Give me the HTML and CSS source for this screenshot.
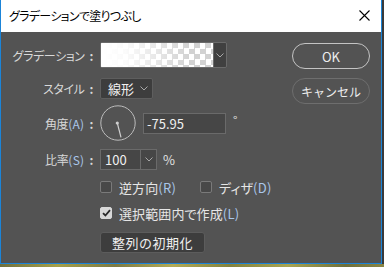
FILE: index.html
```html
<!DOCTYPE html>
<html lang="ja">
<head>
<meta charset="utf-8">
<link rel="stylesheet" href="styles.css">
</head>
<body>
<div class="win">
  <div class="titlebar">
    <span class="title">グラデーションで塗りつぶし</span>
    <svg class="close" width="11" height="11" viewBox="0 0 11 11"><path d="M0.5 0.5L10.5 10.5M10.5 0.5L0.5 10.5" stroke="#000" stroke-width="1.1" fill="none"/></svg>
  </div>
  <div class="body">
    <div class="form">
      <div class="row r-grad">
        <span class="lbl">グラデーション<span class="colon">:</span></span>
        <div class="gradpick">
          <div class="swatch"></div>
          <div class="ddbtn"><svg width="8" height="5" viewBox="0 0 8 5"><path d="M0.5 0.5L4 4L7.5 0.5" stroke="#a8a8a8" fill="none"/></svg></div>
        </div>
      </div>
      <div class="row r-style">
        <span class="lbl">スタイル<span class="colon">:</span></span>
        <div class="select"><span class="seltext">線形</span><svg width="8" height="5" viewBox="0 0 8 5"><path d="M0.5 0.5L4 4L7.5 0.5" stroke="#a8a8a8" fill="none"/></svg></div>
      </div>
      <div class="row r-angle">
        <span class="lbl">角度<span class="mn">(A)</span><span class="colon">:</span></span>
        <svg class="dial" width="36" height="36" viewBox="0 0 36 36">
          <circle cx="18" cy="18" r="17.2" stroke="#bdbdbd" stroke-width="1" fill="none"/>
          <circle cx="17.3" cy="18" r="1.6" fill="#cfcfcf"/>
          <path d="M17.3 18L21 32.3" stroke="#cfcfcf" stroke-width="1.2"/>
        </svg>
        <div class="input angle">-75.95</div>
        <span class="deg">°</span>
      </div>
      <div class="row r-ratio">
        <span class="lbl">比率<span class="mn">(S)</span><span class="colon">:</span></span>
        <div class="combo"><span class="ctext">100</span><span class="cbtn"><svg width="8" height="5" viewBox="0 0 8 5"><path d="M0.5 0.5L4 4L7.5 0.5" stroke="#a8a8a8" fill="none"/></svg></span></div>
        <span class="pct">%</span>
      </div>
      <div class="row r-chk1">
        <label class="chk"><span class="box"></span>逆方向<span class="mn">(R)</span></label>
        <label class="chk"><span class="box"></span>ディザ<span class="mn">(D)</span></label>
      </div>
      <div class="row r-chk2">
        <label class="chk"><span class="box on"><svg width="9" height="8" viewBox="0 0 9 8"><path d="M1 4.2L3.4 6.5L8 1.2" stroke="#2a2a2a" stroke-width="1.8" fill="none"/></svg></span>選択範囲内で作成<span class="mn">(L)</span></label>
      </div>
      <div class="row r-reset">
        <button class="reset">整列の初期化</button>
      </div>
    </div>
    <div class="btns">
      <button class="pill ok">OK</button>
      <button class="pill cancel">キャンセル</button>
    </div>
  </div>
</div>
<div class="desk"></div>
</body>
</html>
```
FILE: styles.css
```css
html, body {
  margin: 0;
  padding: 0;
  background: #3a3a3a;
}
body {
  width: 384px;
  height: 267px;
  overflow: hidden;
  font-family: "Noto Sans CJK JP", "Noto Sans", sans-serif;
  font-feature-settings: "palt";
}
.win {
  width: 380px;
  height: 263px;
  border-left: 1px solid #1b84d8;
  border-right: 1px solid #1b84d8;
  border-bottom: 1px solid #1b84d8;
  display: flex;
  flex-direction: column;
}
.titlebar {
  height: 32px;
  background: #fff;
  display: flex;
  align-items: center;
  padding-left: 8px;
  padding-right: 11px;
}
.title {
  font-size: 12px;
  color: #000;
  letter-spacing: -0.7px;
  flex: 1;
  margin-top: -2px;
}
.close {
  display: block;
  margin-top: -2px;
}
.body {
  flex: 1;
  background: #535353;
  display: flex;
  padding-top: 10px;
}
.form {
  flex: 1;
  display: flex;
  flex-direction: column;
}
.row {
  display: flex;
  align-items: center;
}
.lbl {
  width: 93px;
  margin-right: 6px;
  text-align: right;
  font-size: 12px;
  color: #d8d8d8;
  letter-spacing: -0.4px;
  white-space: nowrap;
}
.colon {
  margin-left: 5px;
  margin-right: 1px;
  font-weight: bold;
}
.mn {
  color: #a9c6ea;
  letter-spacing: 0.3px;
}
.r-grad { height: 26px; }
.gradpick {
  display: flex;
  height: 26px;
  width: 127px;
  box-sizing: border-box;
  border: 1px solid #6a6a6a;
  border-radius: 2px;
  overflow: hidden;
}
.swatch {
  width: 112px;
  background:
    linear-gradient(to right, #ffffff 0%, rgba(255,255,255,0.9) 22%, rgba(255,255,255,0) 80%),
    conic-gradient(#d2d2d2 25%, #ffffff 0 50%, #d2d2d2 0 75%, #ffffff 0) 0 0 / 11px 11px;
}
.ddbtn {
  flex: 1;
  background: #404040;
  border-left: 1px solid #6a6a6a;
  display: flex;
  align-items: center;
  justify-content: center;
}
.r-style { height: 21px; margin-top: 10px; }
.select {
  width: 53px;
  height: 21px;
  box-sizing: border-box;
  background: #3d3d3d;
  border: 1px solid #5e5e5e;
  border-radius: 2px;
  display: flex;
  align-items: center;
  padding-left: 7px;
  padding-right: 4px;
  gap: 6px;
}
.seltext {
  font-size: 13px;
  color: #f0f0f0;
  flex: 1;
}
.r-angle { height: 36px; margin-top: 6px; }
.dial { display: block; }
.input {
  height: 21px;
  box-sizing: border-box;
  border: 1px solid #6a6a6a;
  background: #464646;
  font-size: 13px;
  color: #f0f0f0;
  display: flex;
  align-items: center;
  padding-left: 3px;
}
.angle { width: 83px; margin-left: 7px; }
.deg {
  font-size: 12px;
  color: #e0e0e0;
  margin-left: 7px;
  margin-top: -8px;
}
.r-ratio { height: 21px; margin-top: 8px; }
.combo {
  width: 57px;
  height: 21px;
  box-sizing: border-box;
  border: 1px solid #6a6a6a;
  background: #464646;
  display: flex;
}
.ctext {
  flex: 1;
  font-size: 13px;
  color: #f0f0f0;
  padding-left: 4px;
  line-height: 19px;
}
.cbtn {
  width: 15px;
  border-left: 1px solid #6a6a6a;
  display: flex;
  align-items: center;
  justify-content: center;
}
.pct {
  font-size: 13px;
  color: #e0e0e0;
  margin-left: 6px;
}
.r-chk1 {
  height: 20px;
  margin-top: 7px;
  padding-left: 99px;
  display: grid;
  grid-template-columns: 100px auto;
  align-items: center;
}
.r-chk2 { height: 20px; margin-top: 6px; padding-left: 99px; }
.chk {
  display: flex;
  align-items: center;
  font-size: 13px;
  color: #e6e6e6;
  letter-spacing: 0.1px;
}
.box {
  width: 12px;
  height: 12px;
  box-sizing: border-box;
  border: 1px solid #7a7a7a;
  border-radius: 2px;
  background: #484848;
  margin-right: 7px;
  display: flex;
  align-items: center;
  justify-content: center;
}
.box.on {
  background: #d8d8d8;
  border-color: #d8d8d8;
}
.box svg { display: block; }
.r-reset { margin-top: 9px; padding-left: 99px; }
.reset {
  width: 105px;
  height: 21px;
  background: #3d3d3d;
  border: 1px solid #5c5c5c;
  border-radius: 3px;
  color: #f0f0f0;
  font-family: inherit;
  font-size: 13px;
  padding: 0;
  letter-spacing: 0.5px;
}
.btns {
  width: 78px;
  margin-right: 11px;
  display: flex;
  flex-direction: column;
  gap: 9px;
  padding-top: 1px;
}
.pill {
  height: 26px;
  border-radius: 13px;
  background: #535353;
  color: #eeeeee;
  font-family: inherit;
  font-size: 12px;
  padding: 0;
}
.ok {
  border: 1.5px solid #c4c4c4;
  font-size: 13px;
}
.cancel {
  border: 1.5px solid #6e6e6e;
}
.desk {
  width: 384px;
  height: 3px;
  background: linear-gradient(to right, #6f7040, #a5a04a 15%, #7c7a45 30%, #b3ab56 45%, #82823f 60%, #a9a552 75%, #6d6f3c 90%, #8a8646);
}
```
